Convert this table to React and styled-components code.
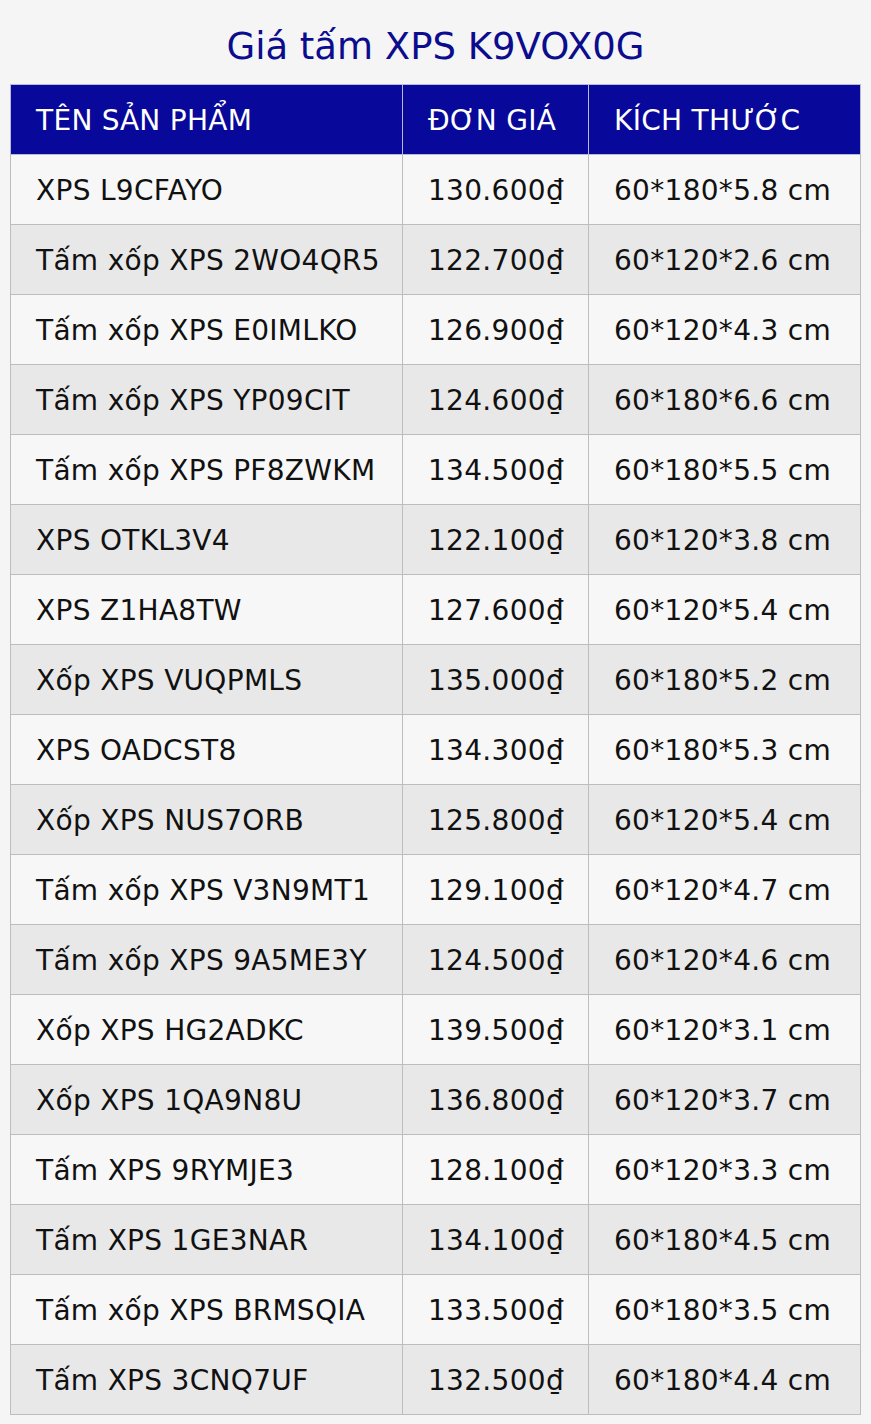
import React from "react";
import styled, { createGlobalStyle } from "styled-components";

const GlobalStyle = createGlobalStyle`
  body {
    margin: 0;
    background: #f5f5f5;
    font-family: "DejaVu Sans", Verdana, sans-serif;
  }
`;

const Page = styled.div`
  padding: 0 10px 10px;
`;

const Title = styled.h1`
  margin: 0;
  padding: 25px 0 15px;
  text-align: center;
  font-size: 37px;
  font-weight: normal;
  line-height: 44px;
  color: #0c0c8e;
`;

const Table = styled.table`
  width: 850px;
  table-layout: fixed;
  border-collapse: collapse;
  font-size: 28px;
  letter-spacing: 0.3px;
`;

const Col = styled.col`
  width: ${(p) => p.$w}px;
`;

const HeadCell = styled.th`
  background: #08089a;
  color: #ffffff;
  font-weight: normal;
  text-align: left;
  padding: 1px 0 0 25px;
  height: 68px;
  border: 1px solid #b8b8d8;
  white-space: nowrap;
`;

const Row = styled.tr`
  background: ${(p) => (p.$alt ? "#e8e8e8" : "#f7f7f7")};
`;

const Cell = styled.td`
  padding: 1px 0 0 25px;
  height: 68px;
  border: 1px solid #bdbdbd;
  color: #111;
  white-space: nowrap;
`;

const rows = [
  ["XPS L9CFAYO", "130.600₫", "60*180*5.8 cm"],
  ["Tấm xốp XPS 2WO4QR5", "122.700₫", "60*120*2.6 cm"],
  ["Tấm xốp XPS E0IMLKO", "126.900₫", "60*120*4.3 cm"],
  ["Tấm xốp XPS YP09CIT", "124.600₫", "60*180*6.6 cm"],
  ["Tấm xốp XPS PF8ZWKM", "134.500₫", "60*180*5.5 cm"],
  ["XPS OTKL3V4", "122.100₫", "60*120*3.8 cm"],
  ["XPS Z1HA8TW", "127.600₫", "60*120*5.4 cm"],
  ["Xốp XPS VUQPMLS", "135.000₫", "60*180*5.2 cm"],
  ["XPS OADCST8", "134.300₫", "60*180*5.3 cm"],
  ["Xốp XPS NUS7ORB", "125.800₫", "60*120*5.4 cm"],
  ["Tấm xốp XPS V3N9MT1", "129.100₫", "60*120*4.7 cm"],
  ["Tấm xốp XPS 9A5ME3Y", "124.500₫", "60*120*4.6 cm"],
  ["Xốp XPS HG2ADKC", "139.500₫", "60*120*3.1 cm"],
  ["Xốp XPS 1QA9N8U", "136.800₫", "60*120*3.7 cm"],
  ["Tấm XPS 9RYMJE3", "128.100₫", "60*120*3.3 cm"],
  ["Tấm XPS 1GE3NAR", "134.100₫", "60*180*4.5 cm"],
  ["Tấm xốp XPS BRMSQIA", "133.500₫", "60*180*3.5 cm"],
  ["Tấm XPS 3CNQ7UF", "132.500₫", "60*180*4.4 cm"],
];

export default function App() {
  return (
    <>
      <GlobalStyle />
      <Page>
        <Title>Giá tấm XPS K9VOX0G</Title>
        <Table>
          <colgroup>
            <Col $w={392} />
            <Col $w={186} />
            <Col $w={272} />
          </colgroup>
          <thead>
            <tr>
              <HeadCell>TÊN SẢN PHẨM</HeadCell>
              <HeadCell>ĐƠN GIÁ</HeadCell>
              <HeadCell>KÍCH THƯỚC</HeadCell>
            </tr>
          </thead>
          <tbody>
            {rows.map((r, i) => (
              <Row key={r[0]} $alt={i % 2 === 1}>
                <Cell>{r[0]}</Cell>
                <Cell>{r[1]}</Cell>
                <Cell>{r[2]}</Cell>
              </Row>
            ))}
          </tbody>
        </Table>
      </Page>
    </>
  );
}
